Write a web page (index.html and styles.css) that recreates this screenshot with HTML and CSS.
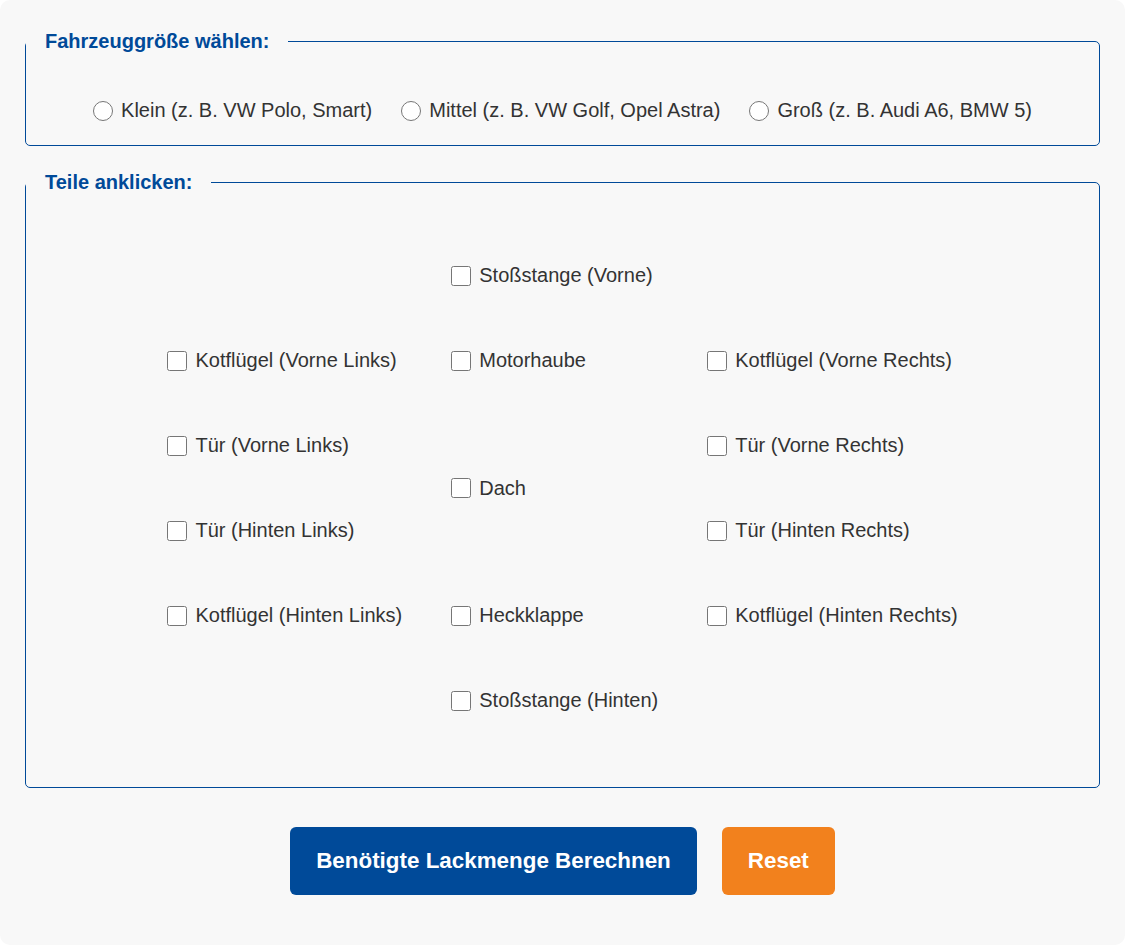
FILE: index.html
```html
<!DOCTYPE html>
<html lang="de">
<head>
    <meta charset="UTF-8">
    <meta name="viewport" content="width=device-width, initial-scale=1.0">
    <title>Lackrechner</title>
    <link rel="stylesheet" href="styles.css">
</head>
<body>
    <div class="container">
        <form id="paint-form">
            <fieldset class="size-box">
                <legend>Fahrzeuggröße wählen:</legend>
                <div class="size-options">
                    <label class="option"><input type="radio" name="size" value="klein"> Klein (z. B. VW Polo, Smart)</label>
                    <label class="option"><input type="radio" name="size" value="mittel"> Mittel (z. B. VW Golf, Opel Astra)</label>
                    <label class="option"><input type="radio" name="size" value="gross"> Groß (z. B. Audi A6, BMW 5)</label>
                </div>
            </fieldset>

            <fieldset class="parts-box">
                <legend>Teile anklicken:</legend>
                <div class="parts-grid">
                    <label class="part mid row-1"><input type="checkbox"> Stoßstange (Vorne)</label>

                    <label class="part left row-2"><input type="checkbox"> Kotflügel (Vorne Links)</label>
                    <label class="part mid row-2"><input type="checkbox"> Motorhaube</label>
                    <label class="part right row-2"><input type="checkbox"> Kotflügel (Vorne Rechts)</label>

                    <label class="part left row-3"><input type="checkbox"> Tür (Vorne Links)</label>
                    <label class="part mid roof"><input type="checkbox"> Dach</label>
                    <label class="part right row-3"><input type="checkbox"> Tür (Vorne Rechts)</label>

                    <label class="part left row-4"><input type="checkbox"> Tür (Hinten Links)</label>
                    <label class="part right row-4"><input type="checkbox"> Tür (Hinten Rechts)</label>

                    <label class="part left row-5"><input type="checkbox"> Kotflügel (Hinten Links)</label>
                    <label class="part mid row-5"><input type="checkbox"> Heckklappe</label>
                    <label class="part right row-5"><input type="checkbox"> Kotflügel (Hinten Rechts)</label>

                    <label class="part mid row-6"><input type="checkbox"> Stoßstange (Hinten)</label>
                </div>
            </fieldset>

            <div class="actions">
                <button type="submit" class="btn btn-primary">Benötigte Lackmenge Berechnen</button>
                <button type="reset" class="btn btn-reset">Reset</button>
            </div>
        </form>
    </div>
</body>
</html>
```

FILE: styles.css
```css
body {
    font-family: "Liberation Sans", Arial, sans-serif;
    margin: 0;
    padding: 0;
    background-color: #fff;
    color: #333;
}

.container {
    background: #f8f8f8;
    border-radius: 10px;
    padding: 30px 25px 50px;
    min-height: 945px;
    box-sizing: border-box;
}

fieldset {
    margin: 0 0 25px;
    border: 1px solid #004a99;
    border-radius: 5px;
}

legend {
    font-size: 20px;
    font-weight: bold;
    color: #004a99;
    padding: 0 19px;
    margin-left: -20px;
}

.size-box {
    padding: 46px 20px 23px;
}

.size-options {
    display: flex;
    justify-content: center;
}

.option {
    display: flex;
    align-items: center;
    font-size: 20px;
    margin: 0 14.5px;
}

input[type="radio"], input[type="checkbox"] {
    width: 20px;
    height: 20px;
    margin: 0 8px 0 0;
}

.parts-box {
    padding: 70px 20px 75px;
}

.parts-grid {
    display: grid;
    grid-template-columns: repeat(3, auto);
    grid-template-rows: repeat(6, 23px);
    row-gap: 62px;
    column-gap: 49px;
    justify-content: center;
}

.part {
    display: flex;
    align-items: center;
    font-size: 20px;
}

.left { grid-column: 1; }
.mid { grid-column: 2; }
.right { grid-column: 3; }

.row-1 { grid-row: 1; }
.row-2 { grid-row: 2; }
.row-3 { grid-row: 3; }
.row-4 { grid-row: 4; }
.row-5 { grid-row: 5; }
.row-6 { grid-row: 6; }

.roof {
    grid-row: 3 / span 2;
    align-self: center;
}

.actions {
    display: flex;
    justify-content: center;
    gap: 25px;
    margin-top: 39px;
}

.btn {
    font-family: inherit;
    font-size: 22.4px;
    font-weight: bold;
    color: #fff;
    border: none;
    border-radius: 6px;
    padding: 21px 26px;
    cursor: pointer;
}

.btn-primary {
    background-color: #004a99;
}

.btn-reset {
    background-color: #f2811d;
}
```
